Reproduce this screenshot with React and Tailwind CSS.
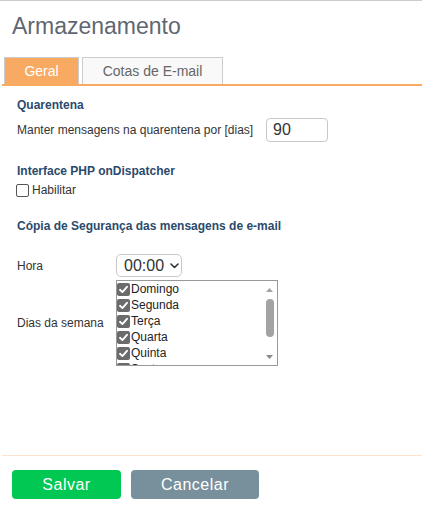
import React from "react";

const days = ["Domingo", "Segunda", "Terça", "Quarta", "Quinta", "Sexta", "Sábado"];

function Checked() {
  return (
    <span className="w-[13px] h-[13px] shrink-0 rounded-[2px] bg-[#6b6b6b] flex items-center justify-center">
      <svg width="11" height="11" viewBox="0 0 11 11">
        <path d="M2 5.8 L4.4 8.1 L9 2.8" fill="none" stroke="#fff" strokeWidth="1.9" strokeLinecap="round" strokeLinejoin="round" />
      </svg>
    </span>
  );
}

export default function App() {
  return (
    <div className="w-[422px] h-[505px] bg-white border-t border-[#cccccc] font-['Liberation_Sans',Arial,sans-serif] overflow-hidden">
      <h1 className="pl-[12px] pt-[11px] text-[23px] leading-[28px] text-[#5f6770]">Armazenamento</h1>

      <div className="mt-[17px] ml-[4px] flex gap-[3px] h-[27px]">
        <div className="w-[75px] h-[27px] bg-[#f8aa62] border border-b-0 border-[#cccccc] text-white text-[14px] flex items-center justify-center">
          Geral
        </div>
        <div className="w-[141px] h-[27px] bg-[#f9f9f9] border border-b-0 border-[#cccccc] text-[#666666] text-[14px] flex items-center justify-center">
          Cotas de E-mail
        </div>
      </div>
      <div className="ml-[2px] h-[2px] bg-[#f8aa62]" />

      <div className="pl-[17px]">
        <div className="mt-[11px] h-[16px] leading-[16px] text-[12px] font-bold text-[#2b4a6b]">Quarentena</div>
        <div className="mt-[5px] h-[24px] flex items-center">
          <span className="w-[249px] text-[12px] text-[#333333]">Manter mensagens na quarentena por [dias]</span>
          <div className="w-[62px] h-[24px] border border-[#c8c8c8] rounded-[4px] flex items-center pl-[6px] text-[16px] text-[#333333]">
            90
          </div>
        </div>

        <div className="mt-[21px] h-[16px] leading-[16px] text-[12px] font-bold text-[#2b4a6b]">Interface PHP onDispatcher</div>
        <div className="mt-[4px] h-[14px] flex items-center -ml-[1px]">
          <span className="w-[13px] h-[13px] border border-[#555555] rounded-[2px] bg-white" />
          <span className="ml-[3px] text-[12px] text-[#333333]">Habilitar</span>
        </div>

        <div className="mt-[21px] h-[16px] leading-[16px] text-[12px] font-bold text-[#2b4a6b]">
          Cópia de Segurança das mensagens de e-mail
        </div>

        <div className="mt-[20px] h-[23px] flex items-center">
          <span className="w-[99px] text-[12px] text-[#333333]">Hora</span>
          <div className="w-[66px] h-[23px] border border-[#c8c8c8] rounded-[5px] flex items-center pl-[7px] text-[16px] text-[#333333]">
            <span>00:00</span>
            <svg className="ml-[6px]" width="9" height="6" viewBox="0 0 9 6">
              <path d="M1 1 L4.5 4.5 L8 1" fill="none" stroke="#333" strokeWidth="1.6" strokeLinecap="round" strokeLinejoin="round" />
            </svg>
          </div>
        </div>

        <div className="mt-[3px] flex items-center">
          <span className="w-[99px] text-[12px] text-[#333333]">Dias da semana</span>
          <div className="w-[162px] h-[86px] border border-[#999999] flex overflow-hidden">
            <div className="flex-1 overflow-hidden">
              {days.map((d) => (
                <div key={d} className="h-[16px] flex items-center">
                  <Checked />
                  <span className="ml-px text-[12px] text-[#222222]">{d}</span>
                </div>
              ))}
            </div>
            <div className="w-[15px] flex flex-col items-center">
              <div className="h-[17px] flex items-end justify-center pb-[6px]">
                <svg width="7" height="4" viewBox="0 0 7 4">
                  <path d="M0 4 L3.5 0 L7 4 Z" fill="#a3a3a3" />
                </svg>
              </div>
              <div className="mt-[1px] w-[8px] h-[38px] rounded-full bg-[#a3a3a3]" />
              <div className="flex-1 flex items-end justify-center pb-[6px]">
                <svg width="7" height="4" viewBox="0 0 7 4">
                  <path d="M0 0 L3.5 4 L7 0 Z" fill="#8a8a8a" />
                </svg>
              </div>
            </div>
          </div>
        </div>
      </div>

      <div className="mt-[89px] ml-[2px] h-px bg-[#fde3cf]" />
      <div className="mt-[14px] pl-[12px] flex gap-[10px]">
        <button className="w-[109px] h-[29px] rounded-[4px] bg-[#00c853] text-white text-[16px] tracking-[0.5px]">Salvar</button>
        <button className="w-[128px] h-[29px] rounded-[4px] bg-[#78909c] text-white text-[16px] tracking-[0.5px]">Cancelar</button>
      </div>
    </div>
  );
}
